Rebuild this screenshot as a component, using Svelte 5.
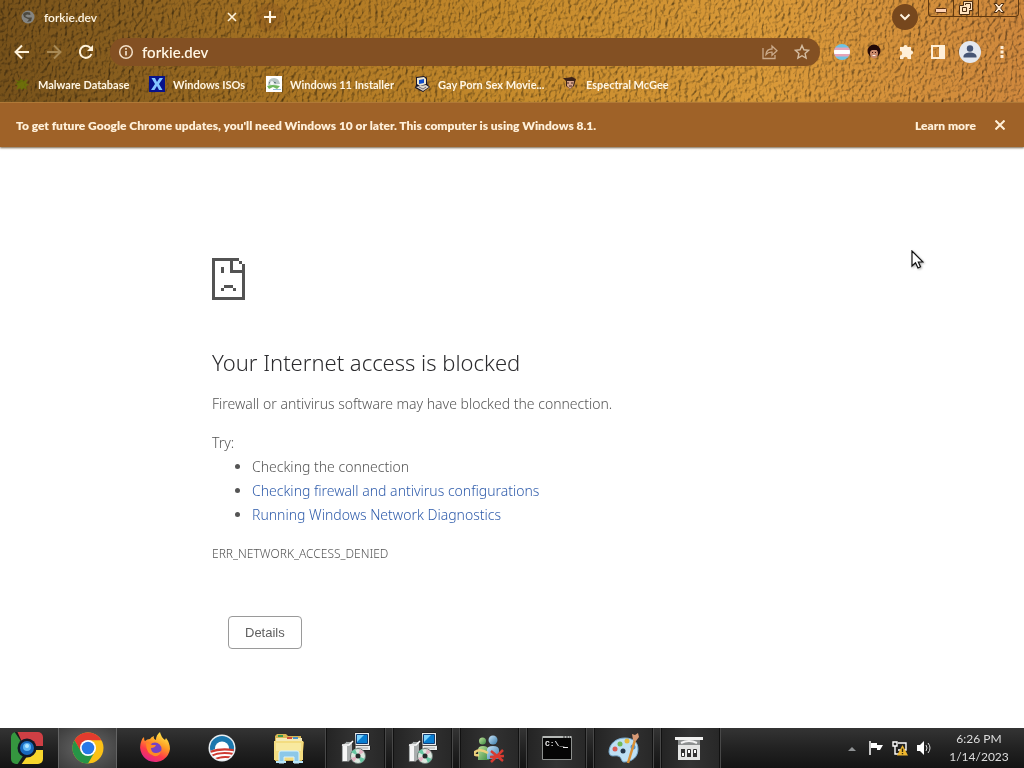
<script>
  const bookmarks = [
    { name: 'Malware Database', icon: 'malware' },
    { name: 'Windows ISOs', icon: 'isos' },
    { name: 'Windows 11 Installer', icon: 'win11' },
    { name: 'Gay Porn Sex Movie...', icon: 'computer' },
    { name: 'Espectral McGee', icon: 'face' }
  ];
  const apps = [
    { name: 'Google Chrome', icon: 'chrome', state: 'active' },
    { name: 'Firefox', icon: 'firefox', state: '' },
    { name: 'Sunrise', icon: 'sunrise', state: '' },
    { name: 'File Explorer', icon: 'folder', state: '' },
    { name: 'Setup', icon: 'setup', state: 'open' },
    { name: 'Setup (2)', icon: 'setup', state: 'open' },
    { name: 'Messenger', icon: 'people', state: 'open' },
    { name: 'Command Prompt', icon: 'cmd', state: 'open' },
    { name: 'Paint', icon: 'paint', state: 'open' },
    { name: 'Panel', icon: 'panel', state: 'open' }
  ];
  let address = $state('forkie.dev');
</script>

<div class="window">
  <header class="chrome">
    <svg class="leather" aria-hidden="true" preserveAspectRatio="none">
      <defs>
        <linearGradient id="tan" x1="0" y1="0" x2="1" y2="0">
          <stop offset="0" stop-color="#76511a" />
          <stop offset=".13" stop-color="#8b601f" />
          <stop offset=".3" stop-color="#ad7724" />
          <stop offset=".5" stop-color="#c68b2c" />
          <stop offset=".75" stop-color="#da9a39" />
          <stop offset="1" stop-color="#cf883d" />
        </linearGradient>
        <filter id="grain" x="0" y="0" width="100%" height="100%" color-interpolation-filters="sRGB">
          <feTurbulence type="fractalNoise" baseFrequency=".3 .22" numOctaves="3" seed="21" result="n" />
          <feDiffuseLighting in="n" surfaceScale="1.600" diffuseConstant="1.140" lighting-color="#fff">
            <feDistantLight azimuth="215" elevation="60" />
          </feDiffuseLighting>
        </filter>
      </defs>
      <rect width="100%" height="100%" fill="url(#tan)" />
      <rect class="grain" width="100%" height="100%" filter="url(#grain)" />
    </svg>

    <div class="tabs">
      <div class="tab">
        <svg width="14" height="14" viewBox="0 0 14 14"><circle cx="7" cy="7" r="6.500" fill="#858582" /><path d="M2 4Q4 1 9 2.500L9.500 5 6 4.500 4 6l3 1.500 4 0-1 3.500-4 1 2-2.500-5-2.500z" fill="#4c4940" /></svg>
        <span class="title">forkie.dev</span>
        <button aria-label="Close tab"><svg width="10" height="10" viewBox="0 0 10 10"><path d="M1 1l8 8M9 1L1 9" stroke="#fff3dc" stroke-width="1.600" /></svg></button>
      </div>
      <button class="new" aria-label="New tab"><svg width="12" height="12" viewBox="0 0 12 12"><path d="M6 0v12M0 6h12" stroke="#fff6e4" stroke-width="2" /></svg></button>
      <button class="search" aria-label="Search tabs"><svg width="12" height="8" viewBox="0 0 12 8"><path d="M1.500 1.500L6 6l4.500-4.500" fill="none" stroke="#fff3df" stroke-width="2" /></svg></button>
      <div class="controls">
        <button aria-label="Minimize"><svg width="12" height="12" viewBox="0 0 12 12"><rect x=".5" y="6.500" width="11" height="4" rx="1" fill="#ffd3b4" stroke="#5e3212" /></svg></button>
        <button aria-label="Restore"><svg width="14" height="14" viewBox="0 0 14 14"><path d="M4.500.5h9v9h-3v4h-10v-9h4z" fill="#ffe3c0" stroke="#4b2c10" /><path d="M6.500 4V2.500h5v5H10M3.500 6.500h4v4h-4z" fill="none" stroke="#4b2c10" /></svg></button>
        <button class="wide" aria-label="Close"><svg width="12" height="12" viewBox="0 0 12 12"><path d="M1 1.500h3l2 2.500 2-2.500h3L7.700 6l3.300 4.500H8L6 8l-2 2.500H1L4.300 6z" fill="#ffe9cf" stroke="#4b2c10" /></svg></button>
      </div>
    </div>

    <div class="toolbar">
      <button aria-label="Back"><svg width="16" height="16" viewBox="0 0 16 16"><path d="M15 8H2M8 1.500L1.500 8 8 14.500" fill="none" stroke="#fff3dc" stroke-width="2" /></svg></button>
      <button aria-label="Forward" disabled><svg width="16" height="16" viewBox="0 0 16 16"><path d="M1 8h13M8 1.500L14.500 8 8 14.500" fill="none" stroke="#a98a55" stroke-width="2" /></svg></button>
      <button aria-label="Reload"><svg width="16" height="16" viewBox="0 0 16 16"><path d="M13.500 10A6 6 0 1 1 12.500 4" fill="none" stroke="#fff3dc" stroke-width="2" /><path d="M15 1v6H9z" fill="#fff3dc" /></svg></button>
      <div class="omnibox">
        <svg width="16" height="16" viewBox="0 0 16 16"><circle cx="8" cy="8" r="6.300" fill="none" stroke="#f3dfc8" stroke-width="1.500" /><path d="M8 7v4.500M8 4v1.700" stroke="#f3dfc8" stroke-width="1.700" /></svg>
        <input aria-label="Address" bind:value={address} />
        <button aria-label="Share"><svg width="16" height="16" viewBox="0 0 16 16"><path d="M1 4v10.500h12V11M4 10.500c.3-4 3-5.500 6-5.500V2l5 4.700-5 4.500V8.200C7.500 8 5.500 8.800 4 10.500z" fill="none" stroke="#c9a98a" stroke-width="1.300" /></svg></button>
        <button aria-label="Bookmark this page"><svg width="16" height="16" viewBox="0 0 16 16"><path d="M8 1.500l1.900 4.300 4.700.5-3.500 3.100 1 4.700L8 11.700l-4.100 2.400 1-4.700-3.500-3.100 4.700-.5z" fill="none" stroke="#d5bda2" stroke-width="1.400" /></svg></button>
      </div>
      <div class="extensions">
        <button aria-label="Flag extension"><svg width="16" height="16" viewBox="0 0 16 16"><clipPath id="disc"><circle cx="8" cy="8" r="8" /></clipPath><g clip-path="url(#disc)"><path fill="#6fc3e4" d="M0 0h16v16H0z" /><path fill="#e7a4b8" d="M0 3.500h16v9H0z" /><path fill="#fff" d="M0 6h16v4H0z" /></g></svg></button>
        <button aria-label="Portrait extension"><svg width="16" height="16" viewBox="0 0 16 16"><circle cx="8" cy="7" r="6.500" fill="#210808" /><ellipse cx="8" cy="9.500" rx="4" ry="5" fill="#c98a6c" /><path d="M3 8Q4 3 8 3t5 5L10.500 6H6z" fill="#210808" /><path d="M6 8.500h1M9 8.500h1" stroke="#3c1511" /><path d="M6 11q2 2 4 0z" fill="#fff" /></svg></button>
        <button aria-label="Extensions"><svg width="16" height="16" viewBox="0 0 16 16"><path d="M2 3h3.500a2 2 0 0 1 4 0H13v3.500a2.100 2.100 0 0 1 0 4.200V15H9.700a2.200 2.200 0 0 0-4.400 0H2v-3.500a2.200 2.200 0 0 0 0-4.400z" fill="#fff0d9" /></svg></button>
        <button aria-label="Side panel"><svg width="14" height="14" viewBox="0 0 14 14"><path fill-rule="evenodd" d="M0 0h14v14H0zM2 2v10h6V2z" fill="#fff0d9" /></svg></button>
        <button aria-label="Profile"><svg width="22" height="22" viewBox="0 0 22 22"><circle cx="11" cy="11" r="11" fill="#e4e8ef" /><circle cx="11" cy="7.500" r="3.200" fill="#465575" /><path d="M4.500 16.500v-1.300c0-2.300 3.500-3.700 6.500-3.700s6.500 1.400 6.500 3.700v1.300z" fill="#465575" /></svg></button>
        <button aria-label="Menu"><svg width="4" height="14" viewBox="0 0 4 14"><path d="M.5 1h3v3h-3zM.5 5.500h3v3h-3zM.5 10h3v3h-3z" fill="#fff0d9" /></svg></button>
      </div>
    </div>

    <nav class="bookmarks" aria-label="Bookmarks">
      {#each bookmarks as b}
        <a href="#bookmark">
          <svg width="16" height="16" viewBox="0 0 16 16">
            {#if b.icon === 'malware'}
              <path d="M1 4l4 1 2-2 3 2 4-2-2 4 3 2-3 1 1 4-3-2-2 2-2-2-4 2 2-4-3-2 3-1z" fill="#668000" opacity=".6" />
            {:else if b.icon === 'isos'}
              <path fill="#07128c" d="M0 0h16v16H0z" /><path d="M2.500 2H6l2 4 2.500-4H14L10 8l3.500 6H10L8 10l-2.500 4H2l4-6z" fill="#83c5ff" />
            {:else if b.icon === 'win11'}
              <path fill="#fff" d="M0 0h16v16H0z" /><path d="M2 9q0-7 6-7 5 0 6 6z" fill="#b9c6c5" /><path d="M3 7q3-3 7 0" fill="none" stroke="#526c70" /><circle cx="6" cy="7" r="2" fill="#f4f7f6" /><path d="M1 10q5-2 13 0l-3 3-4-2-4 2z" fill="#70b75d" /><path d="M7 13h8v1H7z" fill="#92bdd5" />
            {:else if b.icon === 'computer'}
              <path d="M2 1l8-1 3 2v6l3 3-7 5-8-4 1-3z" fill="#17152b" /><path d="M3 2l7-1 2 2v5l-6 2-3-2z" fill="#eee7d1" /><path d="M5 4l5-1v4L5 8z" fill="#124cc9" /><path d="M2 11l4-1 6-1 3 2-6 4z" fill="#ddd5c7" /><path d="M5 11l4 2 3-2" fill="none" stroke="#776f7b" />
            {:else}
              <path d="M1 2l3 0 6-1 4 2-2 7-4 3-4-3V5z" fill="#3b2218" /><path d="M5 5l7 0-1 5-3 3-3-3z" fill="#d6a389" /><path d="M5 7h2M9 7h2M7 10h3" stroke="#4b2b20" />
            {/if}
          </svg>
          <span>{b.name}</span>
        </a>
      {/each}
    </nav>
  </header>

  <div class="notice" role="status">
    <p>To get future Google Chrome updates, you'll need Windows 10 or later. This computer is using Windows 8.1.</p>
    <a href="#learn">Learn more</a>
    <button aria-label="Dismiss"><svg width="10" height="10" viewBox="0 0 10 10"><path d="M.5.5l9 9M9.500.5l-9 9" stroke="#fff0d9" stroke-width="2" /></svg></button>
  </div>

  <main>
    <article>
      <svg class="sad" width="33" height="42" viewBox="0 0 11 14" shape-rendering="crispEdges"><path fill="#535353" d="M0 0h9v1H7v3h4v10H0zM1 1v12h9V5H6V1zM9 1h1v1H9zM10 2h1v2h-1zM3 3h1v2H3zM4 9h3v1H4zM3 10h1v1H3zM7 10h1v1H7z" fill-rule="evenodd" /></svg>
      <h1>Your Internet access is blocked</h1>
      <p>Firewall or antivirus software may have blocked the connection.</p>
      <div class="suggestions">
        <p>Try:</p>
        <ul>
          <li>Checking the connection</li>
          <li><a href="#firewall">Checking firewall and antivirus configurations</a></li>
          <li><a href="#diagnostics">Running Windows Network Diagnostics</a></li>
        </ul>
      </div>
      <div class="code">ERR_NETWORK_ACCESS_DENIED</div>
      <button class="details">Details</button>
    </article>
  </main>

  <footer>
    <button class="start" aria-label="Start">
      <svg width="34" height="34" viewBox="0 0 34 34"><clipPath id="tile"><rect x="1" y="1" width="32" height="32" rx="5" /></clipPath><g clip-path="url(#tile)"><path d="M0 0h34v34H0z" fill="#191a1c" /><path d="M7 0h27v15H20l-8-4z" fill="#cf3f44" /><path d="M0 0h4l8 12-2 8 3 5-6 9H0z" fill="#35963f" /><path d="M23 19h11v15H11l7-10z" fill="#f7d62d" /></g><circle cx="17" cy="17" r="9.500" fill="#111827" /><circle cx="17" cy="17" r="7" fill="#1769bd" /><circle cx="17" cy="16" r="4" fill="#5eb8f6" /><circle cx="17" cy="15" r="2" fill="#b4e7ff" /></svg>
    </button>
    <div class="apps">
      {#each apps as app}
        <button class={app.state} aria-label={app.name}>
          <svg width="32" height="32" viewBox="0 0 32 32">
            {#if app.icon === 'chrome'}
              <circle cx="16" cy="16" r="15.500" fill="#fbc116" /><path d="M2.500 8.200A15.500 15.500 0 0 1 29.400 8.200H16L9 20z" fill="#e33b2e" /><path d="M2.500 8.200A15.500 15.500 0 0 0 16 31.500l7-12-7 3-7-3z" fill="#269447" /><circle cx="16" cy="16" r="8" fill="#fff" /><circle cx="16" cy="16" r="6.300" fill="#2878e8" />
            {:else if app.icon === 'firefox'}
              <defs><linearGradient id="fire" x1=".8" y1="0" x2=".3" y2="1"><stop stop-color="#fff150" /><stop offset=".4" stop-color="#ff9d24" /><stop offset=".7" stop-color="#ff3c48" /><stop offset="1" stop-color="#df238e" /></linearGradient></defs>
              <path d="M2 10q1-4 3-5 0 3 1 4 2-2 5-2 1-2 4-3-1 3 2 4 0-5 4-8 1 5 5 8l1-2q4 5 4 11A15 15 0 1 1 2 10z" fill="url(#fire)" /><circle cx="16" cy="17" r="6.500" fill="#7542c4" /><path d="M7 11q4 0 6 2l4 0q-1 3-5 3 0 5 5 5 3 0 5-2-1 6-7 5Q7 22 7 11z" fill="#ff8a22" />
            {:else if app.icon === 'sunrise'}
              <g transform="translate(2.500 2.500)"><clipPath id="sun"><circle cx="13.500" cy="13.500" r="12" /></clipPath><circle cx="13.500" cy="13.500" r="13.500" fill="#e9eef2" /><g clip-path="url(#sun)"><path d="M0 0h27v18H0z" fill="#1b78ae" /><circle cx="13.500" cy="14" r="7" fill="#fff" /><path d="M0 17q13-6 27 0v12H0z" fill="#fff" /><path d="M0 18q12-5 27-2M1 22q12-6 26-2M4 26q10-6 22-2" fill="none" stroke="#cf3b32" stroke-width="2" /></g></g>
            {:else if app.icon === 'folder'}
              <path d="M2 4l2-2h9l2 2h13v4l3 2-2 19H2z" fill="#d9b654" /><path d="M3 6h26v15H3z" fill="#f4e9b5" /><path d="M5 3h5v2H5z" fill="#3b9a4c" /><path d="M14 5h5v2h-5z" fill="#cf4f3d" /><path d="M20 5h5v2h-5z" fill="#4a91c5" /><path d="M1 9h29v19H1z" fill="#f3dc80" /><path d="M3 11h25v8H3z" fill="#f8e99f" /><path d="M6 31V21q0-2 2-2h16q2 0 2 2v10h-5v-6H11v6z" fill="#8cc8e8" stroke="#d5f2ff" /><path d="M3 30h10M20 30h10" stroke="#b9e7fa" stroke-width="2" />
            {:else if app.icon === 'setup'}
              <path d="M14.500.5h15v13h1v5H15v-5z" fill="#e9eceb" stroke="#222" /><path d="M16.500 2.500h11v9h-11z" fill="#087ed1" stroke="#123d73" /><path d="M17 10l7-7h-7z" fill="#79d3ff" /><path d="M15 13.500h15" stroke="#555" /><path d="M17 16h11" stroke="#aaa" /><path d="M1.500 13.500l5-4h6v17l-4 3.500h-7z" fill="#a9adad" stroke="#333" /><path d="M3 14h4v15H3z" fill="#f6f6f6" /><path d="M2 13h7l4-4" fill="none" stroke="#fff" stroke-width="1.500" /><circle cx="18" cy="24" r="7.500" fill="#dce8df" stroke="#6a7773" /><path d="M18 24l-7-4 4-3zM18 24l7 3-4 4z" fill="#68c7a3" /><path d="M18 24l2-7 4 3zM18 24l-4 6-3-4z" fill="#e4b4c3" /><circle cx="18" cy="24" r="2.500" fill="#252b2b" />
            {:else if app.icon === 'people'}
              <defs><linearGradient id="leaf" x1="0" y1="0" x2="1" y2="1"><stop stop-color="#c1e39b" /><stop offset="1" stop-color="#3c8b45" /></linearGradient><linearGradient id="sky" x1="0" y1="0" x2="1" y2="1"><stop stop-color="#c9e6fb" /><stop offset="1" stop-color="#397baa" /></linearGradient></defs>
              <g transform="translate(-2 1)"><circle cx="10.500" cy="8" r="3.500" fill="url(#leaf)" /><path d="M6 27V17q0-4 5-4t6 4v10z" fill="url(#leaf)" /><circle cx="21" cy="7" r="4.500" fill="url(#sky)" /><path d="M15 26v-9q0-4 6-4t6 4v9z" fill="url(#sky)" /><path d="M16 20q-8-5-13-1-2 4 4 3" fill="none" stroke="#edd07c" stroke-width="2.500" /><path d="M19 18l12 10M31 17L19 29M18 24l14-1" stroke="#d83a31" stroke-width="2.500" /></g>
            {:else if app.icon === 'cmd'}
              <path d="M1.500 4.500h29v23h-29z" fill="#050505" stroke="#8e918f" /><path d="M2 4h28v2H2z" fill="#b6b9b7" /><path d="M22 5h2M25 5h2M28 5h1" stroke="#333" /><text x="4" y="14" font-family="Liberation Mono" font-size="8" font-weight="700" fill="#f1f1f1">C:\_</text><path d="M22 15.500h5" stroke="#eee" />
            {:else if app.icon === 'paint'}
              <path d="M1 20C1 12 8 6 17 6c8 0 13 4 13 11 0 8-6 13-14 13-3 0-2-5-6-6s-8 2-9-4z" fill="#bee0f4" stroke="#79abcf" /><circle cx="7" cy="17" r="2.500" fill="#d95d55" /><circle cx="12" cy="12" r="2.500" fill="#71b957" /><circle cx="19" cy="9" r="2.500" fill="#e5ba3f" /><circle cx="25" cy="15" r="2.500" fill="#4f92d0" /><circle cx="15" cy="19" r="2.500" fill="#25364a" /><path d="M27 8L20 31" stroke="#d99035" stroke-width="2.500" /><path d="M25 8l-1-6 3 1 3-2 1 4-3 4z" fill="#d89a75" />
            {:else}
              <g transform="translate(-2 1)"><path d="M2 4h28v3H2z" fill="#f1f1f0" /><path d="M5 7h22v5H5z" fill="#8d9090" /><path d="M8 10q8-4 16 0" fill="none" stroke="#f4f4f4" stroke-width="2" /><path d="M5 12h22v15H5z" fill="#e4e5e4" /><path d="M8.500 16.500h3v7h-3zM14.500 16.500h3v7h-3zM20.500 16.500h3v7h-3z" fill="#fff" stroke="#333" /><path d="M8 16h4v4H8zM14 20h4v4h-4zM20 20h4v4h-4z" fill="#333" /></g>
            {/if}
          </svg>
        </button>
      {/each}
    </div>
    <div class="tray">
      <button aria-label="Show hidden icons"><svg width="8" height="5" viewBox="0 0 8 5"><path d="M0 5l4-4 4 4z" fill="#8f9294" /></svg></button>
      <button aria-label="Action Center"><svg width="16" height="16" viewBox="0 0 16 16"><path d="M2 1v14" stroke="#fff" stroke-width="1.500" /><path d="M3 3h6v2h6l-3 5H9V8H3z" fill="#fff" /></svg></button>
      <button aria-label="Network"><svg width="16" height="16" viewBox="0 0 16 16"><path d="M1 2h4v4H1zM3 6v8h5M6 3h8v7H6" fill="none" stroke="#fff" stroke-width="1.400" /><path d="M10.500 5l5.500 10.500H5z" fill="#eeb62f" /><path d="M10.500 8.500v3.500M10.500 13v1.300" stroke="#352a0c" stroke-width="1.400" /></svg></button>
      <button aria-label="Volume"><svg width="16" height="16" viewBox="0 0 16 16"><path d="M1 5h3l4-4v14l-4-4H1z" fill="#fff" /><path d="M10 5q2 3 0 6M12 3q4 5 0 10" fill="none" stroke="#ddd" /></svg></button>
      <time datetime="2023-01-14T18:26"><span>6:26 PM</span><span>1/14/2023</span></time>
    </div>
  </footer>

  <svg class="pointer" width="13" height="20" viewBox="0 0 13 20" aria-hidden="true"><path d="M1 1v15l3.500-3.300L7 18l2.500-1.200L7.300 12H12z" fill="#fff" stroke="#111" stroke-width="1.200" /></svg>
</div>

<style>
  :global(body) { margin: 0; background: #fff; }
  .window { position: relative; display: flex; flex-direction: column; min-height: 100vh; font-family: "Comic Sans MS", Lato, sans-serif; }
  button { display: flex; align-items: center; justify-content: center; flex: none; margin: 0; padding: 0; border: 0; background: none; font: inherit; }
  svg { display: block; flex: none; }
  a { text-decoration: none; }
  p { margin: 0; }
  .chrome { position: relative; color: #fff6e4; font-size: 12px; font-weight: 600; }
  .leather { position: absolute; inset: 0; width: 100%; height: 100%; }
  .grain { mix-blend-mode: multiply; }
  .tabs, .toolbar, .bookmarks { position: relative; display: flex; align-items: center; }
  .tabs { height: 34px; padding: 0 5px 0 16px; }
  .tab { display: flex; align-items: center; box-sizing: border-box; width: 231px; padding-left: 5px; gap: 9px; }
  .title { flex: 1; }
  .tab button { width: 20px; height: 20px; margin-right: 5px; }
  .new { width: 28px; height: 28px; margin-left: 9px; margin-right: auto; border-radius: 50%; background: #7a491a40; }
  .search { width: 26px; height: 26px; margin-right: 10px; border-radius: 50%; background: #76471d; }
  .controls { display: flex; align-self: flex-start; height: 16px; border: 1px solid #60380f; border-top: 0; border-radius: 0 0 4px 4px; }
  .controls button { box-sizing: border-box; width: 25px; border-right: 1px solid #60380f; }
  .controls .wide { width: 39px; border-right: 0; }
  .toolbar { height: 36px; padding: 0 6px; }
  .toolbar button { width: 32px; height: 28px; }
  .omnibox { display: flex; align-items: center; flex: 1; min-width: 0; box-sizing: border-box; height: 28px; margin: 0 6px 0 8px; padding: 0 2px 0 8px; border-radius: 14px; background: #835023; }
  .omnibox input { flex: 1; min-width: 0; margin: 0; padding: 0 8px; border: 0; outline: 0; background: none; color: #fff6e4; font: inherit; font-size: 15px; }
  .extensions { display: flex; }
  .bookmarks { display: grid; grid-template-columns: 135px 117px 148px 148px 1fr; height: 32px; padding: 0 14px 4px; box-sizing: border-box; }
  .bookmarks a { display: flex; align-items: center; gap: 8px; color: inherit; white-space: nowrap; font-size: 11px; font-weight: 700; }
  .notice { position: relative; display: flex; align-items: center; min-height: 45px; box-sizing: border-box; padding: 0 14px 0 16px; border-top: 1px solid #b17937; background: #9f6228; box-shadow: 0 1px 2px #76644b; color: #fff0d9; font-size: 12px; font-weight: 800; }
  .notice p { flex: 1; }
  .notice a { color: inherit; margin-right: 14px; }
  .notice button { width: 20px; height: 20px; }
  main { flex: 1; padding: 111px 24px 48px; color: #555; font-family: "Segoe UI", "Noto Sans", sans-serif; font-size: 14px; font-weight: 300; line-height: 24px; }
  article { max-width: 600px; margin: 0 auto; }
  h1 { margin: 46px 0 14px; color: #2b2b2e; font-size: 22px; font-weight: 300; line-height: 32px; }
  .suggestions { margin-top: 15px; }
  ul { margin: 0; padding-left: 40px; }
  li a { color: #2f5cab; }
  .code { margin-top: 15px; font-size: 12px; }
  .details { margin: 50px 0 0 16px; padding: 0 16px; height: 33px; border: 1px solid #9a9a9a; border-radius: 4px; background: #fff; color: #606060; font-family: "Liberation Sans", sans-serif; font-size: 13px; font-weight: 400; }
  footer { display: flex; height: 40px; background: linear-gradient(#343434, #222 50%, #141414); }
  .start { width: 54px; margin-right: 4px; }
  .apps { display: flex; gap: 8px; flex: 1; min-width: 0; }
  .apps button { width: 59px; box-sizing: border-box; }
  .apps .active { border: 1px solid #646464; border-width: 0 1px; background: radial-gradient(#686868, #3c3c3c); }
  .apps .open { border: 1px solid #111; border-width: 0 1px; background: linear-gradient(90deg, #242424, #333 50%, #282828); box-shadow: 1px 0 #484848, -1px 0 #484848; }
  .tray { display: flex; align-items: center; padding-right: 2px; color: #ddd; font-size: 12px; }
  .tray button { width: 24px; }
  .tray time { display: flex; flex-direction: column; align-items: center; width: 86px; line-height: 18px; }
  .pointer { position: absolute; left: 911px; top: 250px; filter: drop-shadow(1px 1px 1px #aaa); }
</style>
